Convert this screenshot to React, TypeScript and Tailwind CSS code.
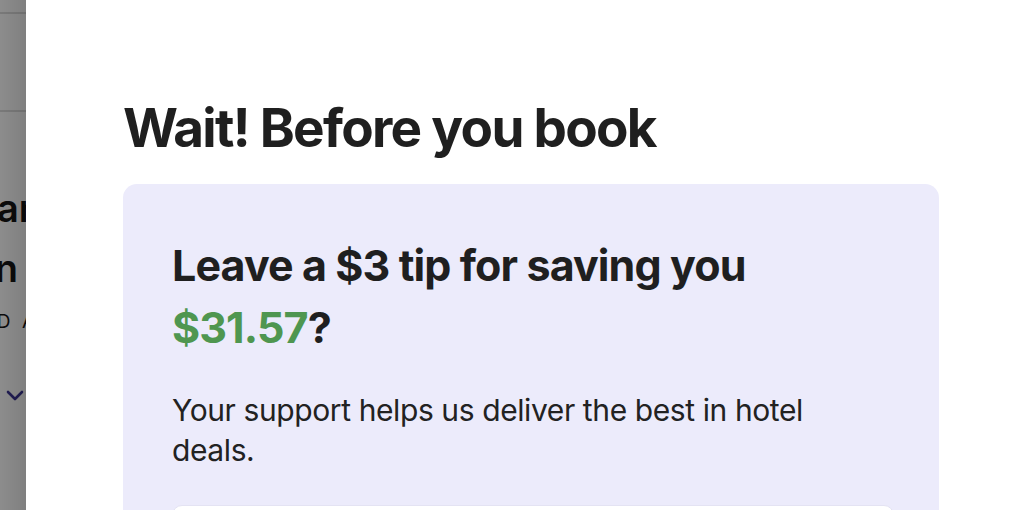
import React from 'react';

const font = { fontFamily: 'Inter, "Noto Sans", sans-serif' };

// Page behind the drawer, dimmed by the backdrop
const BackdropPage: React.FC = () => (
  <div className="relative w-[26px] shrink-0 overflow-hidden bg-white">
    <div className="absolute right-[-16px] top-0 w-[320px] text-[#141414]">
      <div className="h-[14px] border-b-2 border-[#dcdcdc]" />
      <div className="h-[98px] border-b-2 border-[#dcdcdc]" />
      <p className="mt-[66px] text-right text-[38px] font-semibold leading-[60px] whitespace-nowrap">Grand Plan</p>
      <p className="pr-[24px] text-right text-[38px] font-semibold leading-[60px] whitespace-nowrap">Inn</p>
      <p className="mt-[10px] pr-[4px] text-right text-[19px] tracking-[3px] leading-[28px] whitespace-nowrap">OLD A</p>
      <div className="mt-[54px] flex justify-end pr-[18px]">
        <svg width="18" height="12" viewBox="0 0 18 12" fill="none">
          <path d="M2 2l7 7 7-7" stroke="#3b3494" strokeWidth="2.6" strokeLinecap="round" strokeLinejoin="round" />
        </svg>
      </div>
    </div>
    <div className="absolute inset-0 bg-gradient-to-r from-black/45 to-black/50" />
  </div>
);

const TipPrompt: React.FC = () => (
  <div className="w-[816px] rounded-[14px] bg-[#ecebfb] pl-[49px] pr-[45px] pt-[50px]">
    <h2 className="text-[43px] font-bold leading-[62px] tracking-[-0.9px] text-[#1f1f1f]">
      Leave a $3 tip for saving you
      <br />
      <span className="text-[#4f9650]">$31.57</span>?
    </h2>
    <p className="mt-[32px] w-[660px] text-[30px] leading-[40px] tracking-[-0.4px] text-[#222]">
      Your support helps us deliver the best in hotel deals.
    </p>
    <div className="mt-[35px] h-[60px] rounded-t-[10px] border border-[#e4e3f3] bg-white" />
  </div>
);

export default function App() {
  return (
    <div className="flex h-[510px] w-[1030px] overflow-hidden bg-white" style={font}>
      <BackdropPage />
      <div className="flex-1 bg-white pl-[97px] pt-[99px] shadow-[-6px_0_14px_rgba(0,0,0,0.18)]">
        <h1 className="text-[53px] font-bold leading-[58px] tracking-[-1.7px] text-[#1f1f1f]">
          Wait! Before you book
        </h1>
        <div className="mt-[27px]">
          <TipPrompt />
        </div>
      </div>
    </div>
  );
}
